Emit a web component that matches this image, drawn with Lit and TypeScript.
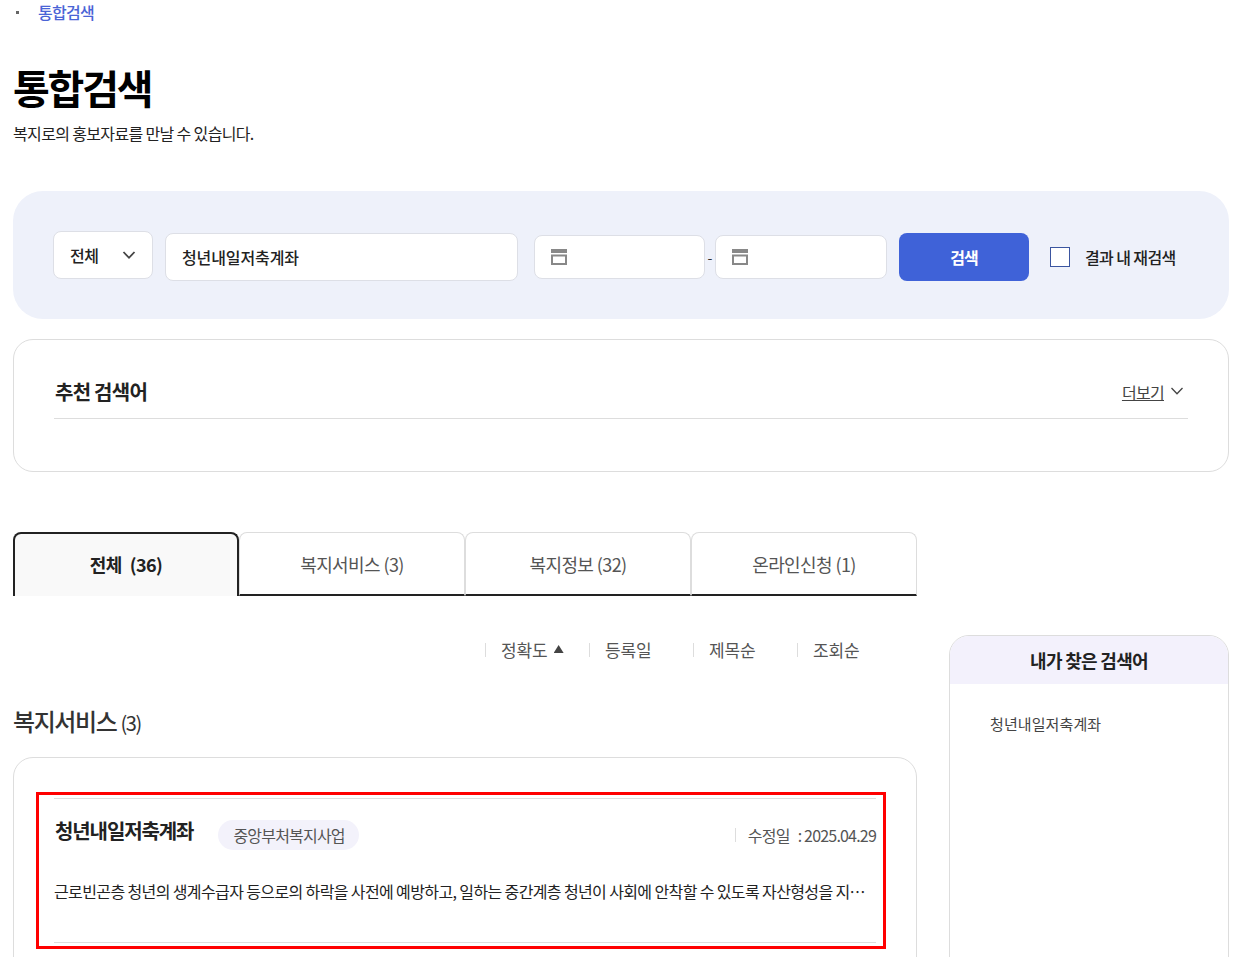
import { LitElement, html, css } from "lit";
import { customElement } from "lit/decorators.js";

const calIcon = html`<svg class="cal" width="16" height="16" viewBox="0 0 16 16" aria-hidden="true"><rect x="0" y="0" width="16" height="4" fill="#888"/><rect x="1" y="6.5" width="14" height="8.5" fill="none" stroke="#888" stroke-width="2"/></svg>`;
const chev = (s: string, w: number) => html`<svg width="14" height="14" viewBox="0 0 14 14" aria-hidden="true"><path d="M1.5 4 L7 9.8 L12.5 4" fill="none" stroke="${s}" stroke-width="${w}"/></svg>`;

@customElement("app-root")
export class AppRoot extends LitElement {
  static styles = css`
    :host { display: block; height: 957px; overflow: hidden; background: #fff; color: #222; font-family: "Noto Sans CJK KR", "Noto Sans", sans-serif; }
    * { box-sizing: border-box; }
    .page { padding: 0 16px 0 13px; width: 1245px; }
    .crumb { display: flex; align-items: center; height: 24px; padding-bottom: 1px; font-size: 16px; font-weight: 500; letter-spacing: -0.7px; color: #4a64d6; }
    .crumb i { width: 3px; height: 3px; background: #666; margin: 1px 19px 0 3px; }
    h1 { margin: 36px 0 0; font-size: 40px; line-height: 54px; font-weight: 700; letter-spacing: -2.2px; color: #000; }
    .sub { margin: 7px 0 0; font-size: 16px; line-height: 24px; letter-spacing: -0.65px; color: #222; }
    .panel { margin-top: 46px; height: 128px; background: #eef1fa; border-radius: 30px; padding: 40px 0 0 40px; display: flex; }
    .box { background: #fff; border: 1px solid #dddfe6; border-radius: 8px; display: flex; align-items: center; }
    .select { width: 100px; height: 48px; padding: 0 16px 1px; justify-content: space-between; font-size: 16px; font-weight: 500; letter-spacing: -0.4px; margin-right: 12px; }
    .query { width: 353px; height: 48px; margin: 2px 16px 0 0; padding: 0 16px 1px; font-size: 16px; font-weight: 500; letter-spacing: -0.1px; }
    .date { height: 44px; margin-top: 4px; padding-left: 16px; }
    .d1 { width: 171px; }
    .d2 { width: 172px; margin-right: 12px; }
    .dash { width: 10px; margin-top: 4px; height: 44px; font-size: 14px; line-height: 44px; text-align: center; color: #333; }
    .btn { width: 130px; height: 48px; margin: 2px 21px 0 0; border-radius: 8px; background: #3f62d8; color: #fff; font-size: 16px; font-weight: 700; letter-spacing: -0.9px; display: flex; align-items: center; justify-content: center; }
    .check { display: flex; align-items: center; height: 48px; margin-top: 2px; font-size: 16px; font-weight: 500; letter-spacing: -0.6px; }
    .check i { width: 20px; height: 20px; background: #fff; border: 1px solid #3b55a0; margin-right: 15px; }
    .rec { margin-top: 20px; height: 133px; border: 1px solid #ddd; border-radius: 20px; padding: 24px 40px 0; }
    .rec-h { height: 55px; border-bottom: 1px solid #ddd; display: flex; align-items: center; justify-content: space-between; padding: 0 4px 0 1px; }
    .rec-h b { font-size: 20px; font-weight: 700; letter-spacing: -0.75px; }
    .more { display: flex; align-items: center; gap: 6px; font-size: 16px; line-height: 26px; color: #444; letter-spacing: -0.7px; }
    .more span { text-decoration: underline; padding-top: 1px; }
    .layout { display: flex; gap: 32px; margin-top: 60px; }
    .left { width: 904px; flex: none; }
    .tabs { display: flex; height: 64px; }
    .tab { width: 226px; border: 1px solid #ddd; border-bottom: 2px solid #222; border-radius: 8px 8px 0 0; display: flex; align-items: center; justify-content: center; font-size: 18px; letter-spacing: -0.6px; color: #555; }
    .tab.on { background: #f9f9f9; border: 2px solid #222; border-bottom: 0; color: #222; font-weight: 700; padding-bottom: 2px; }
    .tab.on span { margin-left: 8px; }
    .sort { display: flex; height: 30px; margin-top: 39px; padding-left: 472px; }
    .sort div { width: 104px; display: flex; align-items: center; font-size: 17px; padding-bottom: 1px; letter-spacing: -0.1px; color: #555; position: relative; padding-left: 16px; }
    .sort div::before { content: ""; position: absolute; left: 0; top: 8px; width: 1px; height: 14px; background: #ddd; }
    .tri { width: 10px; height: 8px; background: #444; clip-path: polygon(50% 0, 100% 100%, 0 100%); margin: 0 0 1px 6px; }
    .sec { margin: 36px 0 0; font-size: 24px; line-height: 40px; font-weight: 500; letter-spacing: -1.4px; color: #333; }
    .sec small { font-size: 20px; font-weight: 400; }
    .card { margin-top: 14px; height: 260px; border: 1px solid #ddd; border-radius: 20px; padding: 34px 0 0 22px; }
    .red { width: 850px; height: 157px; border: 3px solid #f00; padding: 3px 7px 3px 15px; }
    .item { height: 145px; border-top: 1px solid #ddd; border-bottom: 1px solid #ddd; }
    .row { display: flex; align-items: flex-start; height: 73px; }
    .title { margin: 16px 0 0 1px; font-size: 20px; line-height: 32px; font-weight: 700; letter-spacing: -1.1px; color: #222; }
    .badge { margin: 21px 0 0 25px; height: 30px; padding: 0 14px 0 15px; border-radius: 15px; background: #f3f2fb; font-size: 16px; line-height: 30px; letter-spacing: -0.8px; color: #555; }
    .mod { margin: 21px 0 0 auto; height: 30px; font-size: 16px; line-height: 30px; color: #555; letter-spacing: -0.8px; padding-left: 13px; position: relative; }
    .mod::before { content: ""; position: absolute; left: 0; top: 8px; width: 1px; height: 14px; background: #ddd; }
    .mod span { margin-left: 8px; }
    .desc { width: 812px; margin: 7px 0 0; font-size: 16px; line-height: 24px; letter-spacing: -0.62px; color: #222; white-space: nowrap; overflow: hidden; text-overflow: ellipsis; }
    .side { width: 280px; flex: none; height: 400px; margin-top: 103px; border: 1px solid #ddd; border-radius: 20px 20px 0 0; overflow: hidden; }
    .side-h { height: 48px; background: #f3f1fc; text-align: center; font-size: 18px; line-height: 48px; font-weight: 700; letter-spacing: -0.7px; color: #222; }
    .side p { margin: 28px 0 0 40px; font-size: 15px; line-height: 24px; letter-spacing: 0.1px; color: #444; }
  `;

  render() {
    return html`<div class="page">
      <div class="crumb"><i></i>통합검색</div>
      <h1>통합검색</h1>
      <p class="sub">복지로의 홍보자료를 만날 수 있습니다.</p>
      <div class="panel">
        <div class="box select">전체 ${chev("#444", 1.8)}</div>
        <div class="box query">청년내일저축계좌</div>
        <div class="box date d1">${calIcon}</div>
        <div class="dash">-</div>
        <div class="box date d2">${calIcon}</div>
        <div class="btn">검색</div>
        <div class="check"><i></i>결과 내 재검색</div>
      </div>
      <div class="rec">
        <div class="rec-h"><b>추천 검색어</b><div class="more"><span>더보기</span>${chev("#444", 1.3)}</div></div>
      </div>
      <div class="layout">
        <div class="left">
          <div class="tabs">
            <div class="tab on">전체<span>(36)</span></div>
            <div class="tab">복지서비스 (3)</div>
            <div class="tab">복지정보 (32)</div>
            <div class="tab">온라인신청 (1)</div>
          </div>
          <div class="sort">
            <div>정확도<i class="tri"></i></div><div>등록일</div><div>제목순</div><div>조회순</div>
          </div>
          <div class="sec">복지서비스 <small>(3)</small></div>
          <div class="card">
            <div class="red"><div class="item">
              <div class="row">
                <div class="title">청년내일저축계좌</div>
                <div class="badge">중앙부처복지사업</div>
                <div class="mod">수정일<span>: 2025.04.29</span></div>
              </div>
              <p class="desc">근로빈곤층 청년의 생계수급자 등으로의 하락을 사전에 예방하고, 일하는 중간계층 청년이 사회에 안착할 수 있도록 자산형성을 지원하는 사업입니다.</p>
            </div></div>
          </div>
        </div>
        <aside class="side">
          <div class="side-h">내가 찾은 검색어</div>
          <p>청년내일저축계좌</p>
        </aside>
      </div>
    </div>`;
  }
}
